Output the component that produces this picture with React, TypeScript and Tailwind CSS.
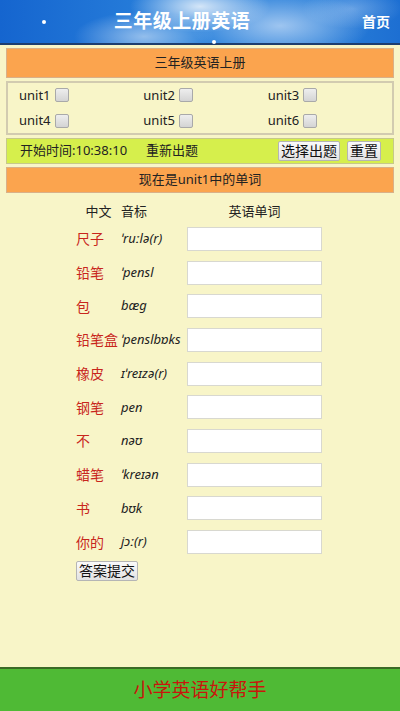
import React from "react";

const UNITS = ["unit1", "unit2", "unit3", "unit4", "unit5", "unit6"];

const WORDS = [
  { cn: "尺子", ph: "ˈruːlə(r)" },
  { cn: "铅笔", ph: "ˈpensl" },
  { cn: "包", ph: "bæɡ" },
  { cn: "铅笔盒", ph: "ˈpenslbɒks" },
  { cn: "橡皮", ph: "ɪˈreɪzə(r)" },
  { cn: "钢笔", ph: "pen" },
  { cn: "不", ph: "nəʊ" },
  { cn: "蜡笔", ph: "ˈkreɪən" },
  { cn: "书", ph: "bʊk" },
  { cn: "你的", ph: "jɔː(r)" },
];

const font = "font-['Noto_Sans','Noto_Sans_CJK_SC',sans-serif]";

function Checkbox() {
  return <span className="inline-block w-[14px] h-[14px] rounded-[2px] border border-[#a9a9a9] bg-[linear-gradient(#eeeeee,#d4d4d4)]" />;
}

function Btn({ children }: { children: React.ReactNode }) {
  return (
    <button
      type="button"
      className="h-[20px] px-[2px] border border-[#b5b5b5] rounded-[2px] bg-[linear-gradient(#fafafa,#e2e2e2)] text-[14px] leading-[18px] text-[#111]"
    >
      {children}
    </button>
  );
}

export default function App() {
  return (
    <div className={`w-[400px] h-[711px] flex flex-col bg-[#f8f5c8] ${font}`}>
      {/* header */}
      <div className="relative h-[45px] shrink-0 flex items-center border-b-2 border-[#1d3d6e] bg-[radial-gradient(ellipse_70px_26px_at_50%_15%,rgba(255,255,255,0.8),transparent),radial-gradient(ellipse_90px_35px_at_70%_60%,rgba(235,243,255,0.6),transparent),radial-gradient(ellipse_70px_25px_at_36%_85%,rgba(255,255,255,0.5),transparent),radial-gradient(ellipse_50px_20px_at_88%_20%,rgba(220,235,255,0.35),transparent),linear-gradient(90deg,#1565cf,#2a82dc_45%,#2a7fd9_80%,#1d6fd2)]">
        <span className="absolute left-[42px] top-[20px] w-[4px] h-[4px] rounded-full bg-white" />
        <span className="absolute left-[212px] top-[40px] w-[4px] h-[4px] rounded-full bg-white" />
        <div className="flex-1 text-center text-white font-bold text-[19px] tracking-[0.5px] pl-[2px]">三年级上册英语</div>
        <div className="w-[38px] text-white font-bold text-[14px]">首页</div>
      </div>

      {/* body */}
      <div className="flex-1 flex flex-col px-[6px] pt-[3px] gap-[3px]">
        <div className="h-[30px] flex items-center justify-center bg-[#fba44e] border border-[#d9b088] text-[13px] text-[#222]">
          三年级英语上册
        </div>

        <div className="h-[54px] border-2 border-[#d2cbb0] grid grid-cols-3 content-center gap-y-[6px] pl-[11px] text-[13px] text-[#222]">
          {UNITS.map((u) => (
            <div key={u} className="flex items-center gap-[4px]">
              <span>{u}</span>
              <Checkbox />
            </div>
          ))}
        </div>

        <div className="h-[26px] flex items-center bg-[#d6ef4c] border border-[#c6c98a] pl-[13px] pr-[12px] text-[13px] text-[#222]">
          <span>开始时间:10:38:10</span>
          <span className="ml-[19px]">重新出题</span>
          <div className="ml-auto flex gap-[7px]">
            <Btn>选择出题</Btn>
            <Btn>重置</Btn>
          </div>
        </div>

        <div className="h-[26px] flex items-center justify-center bg-[#fba44e] border border-[#d9b088] text-[13px] text-[#222]">
          现在是unit1中的单词
        </div>

        {/* table */}
        <div className="ml-[70px] mt-[6px] w-[246px] grid grid-cols-[45px_66px_135px] text-[13px]">
          <div className="h-[20px] flex items-center justify-center text-[#222]">中文</div>
          <div className="h-[20px] flex items-center text-[#222]">音标</div>
          <div className="h-[20px] flex items-center justify-center text-[#222]">英语单词</div>
          {WORDS.map((w) => (
            <React.Fragment key={w.cn}>
              <div className="h-[33.7px] flex items-center text-[14px] text-[#c8261c]">{w.cn}</div>
              <div className="h-[33.7px] flex items-center italic text-[#222] whitespace-nowrap">{w.ph}</div>
              <div className="h-[33.7px] flex items-center">
                <input className="w-[135px] h-[24px] bg-white border border-[#d8d8d0] outline-none" />
              </div>
            </React.Fragment>
          ))}
          <div className="col-span-3 pt-[2px]">
            <Btn>答案提交</Btn>
          </div>
        </div>
      </div>

      {/* footer */}
      <div className="h-[44px] shrink-0 flex items-center justify-center bg-[#4fba35] border-t-2 border-[#3b6a26] text-[19px] text-[#c8160c]">
        小学英语好帮手
      </div>
    </div>
  );
}
